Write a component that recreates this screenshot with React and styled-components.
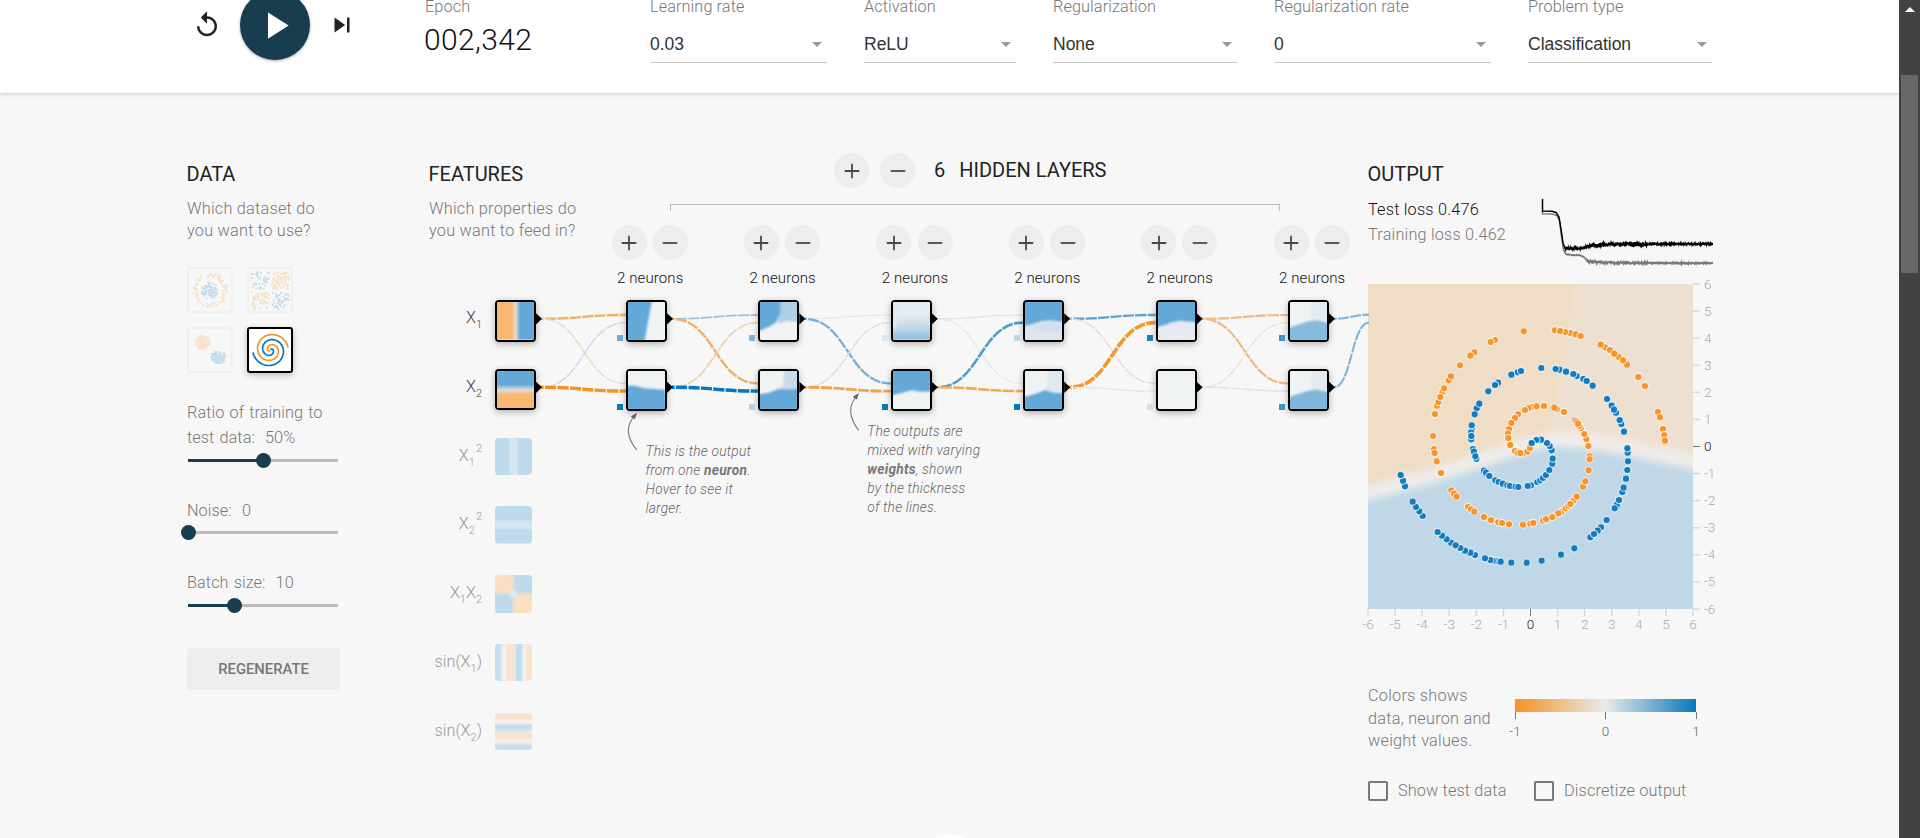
import React from "react";
import styled, { createGlobalStyle, css } from "styled-components";

const ORANGE = "#f59322";
const BLUE = "#0877bd";
const NAVY = "#183d4e";
const sans = `Roboto, "Liberation Sans", sans-serif`;
const arial = `"Liberation Sans", Arial, sans-serif`;

const Global = createGlobalStyle`
  * { box-sizing: border-box; }
  body { margin: 0; overflow: hidden; background: #f7f7f7; font-family: ${sans}; font-weight: 300; }
`;

/* ---------- shell ---------- */
const Window = styled.div`
  display: flex;
  width: 1920px;
  height: 838px;
  overflow: hidden;
`;
const Page = styled.div`
  position: relative;
  flex: 1;
  height: 838px;
  overflow: hidden;
  background: #f7f7f7;
`;
const ScrollTrack = styled.div`
  width: 21px;
  height: 838px;
  background: #424242;
  display: flex;
  flex-direction: column;
  align-items: center;
  padding-top: 7px;
`;
const ScrollArrow = styled.div`
  border: 5px solid transparent;
  border-top: 0;
  border-bottom: 5px solid #fff;
`;
const ScrollThumb = styled.div`
  width: 17px;
  height: 198px;
  margin-top: 63px;
  background: #686868;
`;
const BottomDisc = styled.div`
  position: absolute;
  left: 917px;
  top: 834px;
  width: 66px;
  height: 66px;
  border-radius: 50%;
  background: #fff;
`;

/* ---------- top controls ---------- */
const Header = styled.header`
  position: relative;
  display: flex;
  align-items: flex-start;
  height: 93px;
  padding-left: 192px;
  background: #fff;
  box-shadow: 0 1px 4px rgba(0, 0, 0, 0.18);
`;
const Transport = styled.div`
  display: flex;
  align-items: center;
  width: 233px;
  height: 70px;
  margin-top: -10px;
`;
const PlayButton = styled.div`
  display: flex;
  align-items: center;
  justify-content: center;
  width: 70px;
  height: 70px;
  margin: 0 17px 0 18px;
  border-radius: 50%;
  background: ${NAVY};
  box-shadow: 0 1px 3px rgba(0, 0, 0, 0.35);
`;
const Field = styled.div`
  flex: none;
  width: ${(p) => p.$w}px;
  margin-right: ${(p) => p.$gap}px;
  margin-top: -5px;
`;
const FieldLabel = styled.div`
  font-size: 16.25px;
  line-height: 24px;
  color: #777;
  letter-spacing: 0.1px;
  white-space: nowrap;
`;
const EpochValue = styled.div`
  margin: 3px 0 0 -1px;
  font-size: 30px;
  line-height: 36px;
  letter-spacing: 0.4px;
  color: #111;
`;
const Select = styled.div`
  display: flex;
  align-items: center;
  justify-content: space-between;
  height: 44px;
  padding: 7px 5px 0 0;
  border-bottom: 1px solid #c8c8c8;
  font: 400 17.5px/24px ${arial};
  color: #333;
`;
const Caret = styled.span`
  border: 5px solid transparent;
  border-bottom: 0;
  border-top-color: #999;
`;

/* ---------- main columns ---------- */
const Main = styled.main`
  display: flex;
  align-items: flex-start;
  padding: 69px 0 0 187px;
`;
const DataColumn = styled.section`
  flex: none;
  width: 242px;
`;
const Heading = styled.h4`
  margin: 0 0 0 -0.5px;
  font-size: 20px;
  line-height: 24px;
  font-weight: 400;
  color: #222;
`;
const Lead = styled.p`
  margin: 12px 0 0;
  font-size: 16.25px;
  line-height: 22.4px;
  letter-spacing: 0.24px;
  color: #777;
  white-space: nowrap;
`;
const Thumbs = styled.div`
  display: grid;
  grid-template-columns: 46px 46px;
  gap: 14px;
  margin: 24.2px 0 27px;
`;
const Thumb = styled.svg`
  width: 46px;
  height: 46px;
  border-radius: 3px;
  border: 2px solid ${(p) => (p.$on ? "#000" : "#f0f0f0")};
  background: ${(p) => (p.$on ? "#fff" : "transparent")};
  ${(p) => p.$on && css`box-shadow: 0 2px 6px rgba(0, 0, 0, 0.25);`}
`;
const Control = styled.div`
  width: 152px;
  margin-bottom: ${(p) => p.$gap}px;
`;
const ControlLabel = styled.div`
  font-size: 16.25px;
  line-height: 25px;
  letter-spacing: 0.08px;
  word-spacing: 1px;
  color: #777;
  white-space: pre;
`;
const Slider = styled.div`
  display: flex;
  align-items: center;
  height: 20px;
  padding: 0 1px;
`;
const SliderFill = styled.div`
  flex: none;
  width: ${(p) => p.$w}px;
  height: 3px;
  background: ${NAVY};
`;
const SliderRest = styled.div`
  flex: 1;
  height: 3px;
  background: #bcbcbc;
`;
const Knob = styled.div`
  flex: none;
  width: 15px;
  height: 15px;
  margin: 0 -7.5px;
  border-radius: 50%;
  background: ${NAVY};
  z-index: 1;
`;
const Regenerate = styled.div`
  width: 153px;
  height: 42px;
  border-radius: 3px;
  background: #eee;
  font-size: 14.8px;
  line-height: 42px;
  font-weight: 500;
  text-align: center;
  color: #777;
`;

/* ---------- network ---------- */
const Diagram = styled.section`
  position: relative;
  display: flex;
  flex: none;
  width: 939px;
`;
const Wires = styled.svg`
  position: absolute;
  left: 0;
  top: 0;
  width: 941px;
  height: 600px;
`;
const FeatureColumn = styled.div`
  flex: none;
  width: 155px;
`;
const FeatureList = styled.div`
  margin-top: 57.3px;
`;
const FeatureRow = styled.div`
  display: flex;
  align-items: flex-start;
  height: 68.75px;
`;
const FeatureLabel = styled.div`
  flex: none;
  display: flex;
  justify-content: flex-end;
  width: 53px;
  margin-right: 13px;
  font-size: 16.25px;
  line-height: 35px;
  color: ${(p) => (p.$on ? "#444" : "#999")};
`;
const Sub = styled.span`
  position: relative;
  top: 7px;
  font-size: 11px;
`;
const Sup = styled(Sub)`
  top: -7px;
  margin-left: 1px;
`;
const Tile = styled.div`
  flex: none;
  position: relative;
  width: ${(p) => (p.$on ? 41 : 37)}px;
  height: ${(p) => (p.$on ? 41.5 : 37.5)}px;
  border-radius: 4px;
  overflow: visible;
  ${(p) =>
    p.$on &&
    css`
      border: 2px solid #000;
      box-shadow: 0 2px 7px rgba(0, 0, 0, 0.3);
    `}
`;
const TileArt = styled.svg`
  display: block;
  width: 100%;
  height: 100%;
  border-radius: ${(p) => p.$r}px;
`;
const Bias = styled.i`
  position: absolute;
  left: -11px;
  top: 33px;
  width: 6px;
  height: 6px;
  background: ${(p) => p.$c};
`;
const NetworkColumn = styled.div`
  flex: none;
  width: 784px;
`;
const LayerHeader = styled.div`
  display: flex;
  align-items: center;
  height: 35px;
  margin: -9px 0 0 250px;
`;
const RoundButton = styled.div`
  display: flex;
  align-items: center;
  justify-content: center;
  flex: none;
  width: 35px;
  height: 35px;
  margin-right: ${(p) => p.$gap || 0}px;
  border-radius: 50%;
  background: #ededed;
`;
const LayerTitle = styled(Heading)`
  white-space: pre;
  margin-left: ${(p) => p.$ml}px;
  margin-bottom: 1px;
`;
const Bracket = styled.div`
  width: 609.5px;
  height: 6.5px;
  margin: 16px 0 0 86px;
  border: 1px solid #bbb;
  border-bottom: 0;
`;
const Layers = styled.div`
  display: flex;
  margin-top: 14.5px;
`;
const Layer = styled.div`
  flex: none;
  display: flex;
  flex-direction: column;
  align-items: center;
  width: 132.4px;
`;
const LayerControls = styled.div`
  display: flex;
  gap: 6.3px;
  height: 35px;
  margin-left: -1px;
`;
const NeuronCount = styled.div`
  margin-top: 9px;
  font-size: 15px;
  line-height: 18px;
  letter-spacing: 0.1px;
  color: #111;
`;
const Neurons = styled.div`
  display: flex;
  flex-direction: column;
  gap: 27.5px;
  align-self: flex-start;
  margin: 13px 0 0 42px;
`;
const Callout = styled.p`
  position: absolute;
  left: ${(p) => p.$x}px;
  top: ${(p) => p.$y}px;
  margin: 0;
  font-size: 13.75px;
  line-height: 19.1px;
  letter-spacing: 0.23px;
  font-style: italic;
  color: #666;
  white-space: pre;
  b { font-weight: 700; color: #777; }
`;

/* ---------- output ---------- */
const OutputColumn = styled.section`
  flex: none;
  width: 352px;
`;
const LossRow = styled.div`
  display: flex;
  justify-content: space-between;
  width: 345px;
  height: 87px;
  padding-top: 11px;
`;
const Loss = styled.div`
  font-size: 16.25px;
  line-height: 25px;
  letter-spacing: 0.2px;
  color: ${(p) => p.$c};
`;
const LossChart = styled.svg`
  width: 172px;
  height: 75px;
`;
const Plot = styled.svg`
  display: block;
  width: 360px;
  height: 356px;
  margin-top: 11px;
  margin-left: -10px;
  overflow: visible;
  font: 300 13.5px ${sans};
`;
const Legend = styled.div`
  display: flex;
  margin-top: 45px;
`;
const LegendText = styled(Lead)`
  margin: 0;
  width: 138px;
  line-height: 22.7px;
`;
const Scale = styled.div`
  width: 200px;
  margin-top: 14px;
`;
const ScaleBar = styled.div`
  width: 181px;
  height: 12.5px;
  margin-left: 9px;
  background: linear-gradient(to right, ${ORANGE}, #e8eaeb 50%, ${BLUE});
`;
const ScaleTicks = styled.div`
  display: flex;
  justify-content: space-between;
  margin-left: -1px;
`;
const ScaleTick = styled.div`
  width: 20px;
  font-size: 13.5px;
  line-height: 24px;
  text-align: center;
  color: #666;
  &::before {
    content: "";
    display: block;
    width: 1px;
    height: 7px;
    margin: 0 auto;
    background: #777;
  }
`;
const Checks = styled.div`
  display: flex;
  margin-top: 27.4px;
`;
const Check = styled.div`
  display: flex;
  align-items: center;
  width: ${(p) => p.$w}px;
  height: 20px;
  font-size: 16.25px;
  letter-spacing: 0.14px;
  color: #777;
  white-space: nowrap;
`;
const CheckBox = styled.span`
  width: 20px;
  height: 20px;
  margin-right: 10px;
  border: 2px solid #777;
  border-radius: 2px;
`;

/* ---------- drawing data ---------- */
const rand = (seed) => () => {
  seed = (seed * 16807) % 2147483647;
  return seed / 2147483647;
};

function dataset(kind) {
  const r = rand(kind * 911 + 17);
  const dots = [];
  if (kind === 0) {
    for (let i = 0; i < 95; i++) {
      const a = r() * 6.283, d = r() * 8.5;
      dots.push([20.5 + d * Math.cos(a), 21 + d * Math.sin(a), BLUE]);
      const b = r() * 6.283, e = 13.2 + r() * 4;
      dots.push([21 + e * Math.cos(b), 21 + e * Math.sin(b), ORANGE]);
    }
  } else if (kind === 1) {
    for (let i = 0; i < 230; i++) {
      const x = (r() * 2 - 1) * 17, y = (r() * 2 - 1) * 17;
      dots.push([21.5 + x + Math.sign(x) * 1.5, 21.5 + y + Math.sign(y) * 1.5, x * y > 0 ? BLUE : ORANGE]);
    }
  } else {
    for (let i = 0; i < 130; i++) {
      const a = r() * 6.283, d = Math.pow(r(), 0.7) * 7;
      dots.push([14 + d * Math.cos(a), 13.8 + d * Math.sin(a), ORANGE]);
      const b = r() * 6.283, e = Math.pow(r(), 0.7) * 7.4;
      dots.push([28.8 + e * Math.cos(b), 28.2 + e * 0.85 * Math.sin(b), BLUE]);
    }
  }
  const seen = new Set();
  return dots
    .map(([x, y, c]) => [Math.round(x - 0.8), Math.round(y - 0.8), c])
    .filter(([x, y]) => !seen.has(`${x},${y}`) && seen.add(`${x},${y}`));
}

const spiral = (delta) =>
  Array.from({ length: 80 }, (_, i) => {
    const u = (i + 2) / 82;
    const t = u * 3.5 * Math.PI + delta;
    return `${(21.5 + 18 * u * Math.sin(t)).toFixed(2)},${(21 - 18 * u * Math.cos(t)).toFixed(2)}`;
  }).join(" ");

const PALE = "#f0f3f3";
const SKY = "#63a8d6";
const NEURONS = [
  [
    { bias: "#6fabd3", bg: PALE, shapes: [["-2,-2 24,-2 21,14 16.5,39 -2,39", SKY]] },
    { bias: BLUE, bg: PALE, shapes: [["-2,14.5 8,14.7 16,17 37,18.5 39,39 -2,39", SKY]] },
  ],
  [
    { bias: "#82b3d6", bg: PALE, shapes: [["20,-2 39,-2 39,20 28,18.5 18,21", "#afcfe5"], ["-2,-2 21,-2 20,12 17,19 10,24 -2,29", SKY]] },
    { bias: "#b5d2e2", bg: PALE, shapes: [["24,-2 39,-2 39,20 18,20 23,14", "#c8dcec"], ["-2,23 9,21.5 18,18 39,18 39,39 -2,39", SKY]] },
  ],
  [
    { bias: "#dce5e9", bg: "#e6ecf0", gradient: true, shapes: [] },
    { bias: BLUE, bg: SKY, shapes: [["-2,24 8,22 18,19 28,20.5 39,20 39,39 -2,39", PALE]] },
  ],
  [
    { bias: "#c2d6e4", bg: SKY, shapes: [["-2,24 8,21.5 16,19 24,18 39,19.5 39,39 -2,39", "#dde6ee"], ["4,26 20,20 38,22 36,28 16,29", "#d0e0ec"]] },
    { bias: BLUE, bg: PALE, shapes: [["23,-2 39,-2 39,24 18,22 22,12", "#dde8ef"], ["-2,26 9,23 20,19 28,21.5 39,22 39,39 -2,39", SKY]] },
  ],
  [
    { bias: "#1b80c0", bg: SKY, shapes: [["-2,25 9,22 14,20 22,18.5 39,20 39,39 -2,39", "#e6ebf1"]] },
    { bias: "#d0dfe9", bg: PALE, shapes: [] },
  ],
  [
    { bias: "#3f93cb", bg: PALE, shapes: [["22,-2 39,-2 39,22 20,22", "#e4ebf1"], ["-2,26 9,22 18,19 26,18 39,21 39,39 -2,39", "#86bbdd"]] },
    { bias: "#3f93cb", bg: PALE, shapes: [["22,-2 39,-2 39,22 20,22", "#e4ebf1"], ["-2,26 9,22.5 18,19.5 26,18.5 39,21 39,39 -2,39", "#7fb7dc"]] },
  ],
];

const FEATURES = [
  { id: "x1", on: true, label: <>X<Sub>1</Sub></>, stops: [["0.4", "#f9b872"], ["0.51", "#e6dccf"], ["0.62", SKY]] },
  { id: "x2", on: true, vertical: true, label: <>X<Sub>2</Sub></>, stops: [["0.36", SKY], ["0.5", "#dfdcd4"], ["0.64", "#f9b872"]] },
  { id: "x1q", label: <>X<Sub>1</Sub><Sup>2</Sup></>, stops: [["0.35", "#bedaed"], ["0.42", "#d7e6ee"], ["0.58", "#d7e6ee"], ["0.65", "#bedaed"]] },
  { id: "x2q", vertical: true, label: <>X<Sub>2</Sub><Sup>2</Sup></>, stops: [["0.36", "#bedaed"], ["0.45", "#d7e6ee"], ["0.58", "#d7e6ee"], ["0.65", "#bedaed"]] },
  { id: "xx", quad: true, label: <>X<Sub>1</Sub>X<Sub>2</Sub></> },
  { id: "s1", label: <>sin(X<Sub>1</Sub>)</>, stops: [["0", "#c8dfed"], ["0.1", "#c1dcec"], ["0.25", "#f5f3f1"], ["0.36", "#f9e3cc"], ["0.46", "#f8e6d4"], ["0.53", "#e3e8e8"], ["0.62", "#c1dcec"], ["0.7", "#c4ddec"], ["0.79", "#f3f3f3"], ["0.87", "#f9e3cc"], ["1", "#f9e5d0"]] },
  { id: "s2", vertical: true, label: <>sin(X<Sub>2</Sub>)</>, stops: [["0", "#f9e5d0"], ["0.13", "#f9e3cc"], ["0.26", "#f3f3f3"], ["0.34", "#c4ddec"], ["0.42", "#c8dfec"], ["0.5", "#e3e8e8"], ["0.58", "#f9e3cc"], ["0.65", "#f9e3cc"], ["0.77", "#f5f3f1"], ["0.87", "#c6deec"], ["1", "#c8dfed"]] },
];

/* per gap: [top→top, top→bottom, bottom→top, bottom→bottom] as [colour, width] */
const LINKS = [
  [["#f2b067", 2.4], ["#ead8c5", 1.4], ["#c9dbe6", 1.4], [ORANGE, 3.4]],
  [["#9cc3dd", 1.8], ["#f2b067", 2.4], ["#edd0b0", 1.7], [BLUE, 3.4]],
  [["#e1e6e9", 1.3], ["#74b0d7", 2.3], ["#d2e0e8", 1.4], ["#f1a44e", 2.8]],
  [["#e9dfd5", 1.3], ["#e0e6e9", 1.3], ["#4f9dce", 2.6], ["#f3a752", 2.6]],
  [["#5aa3d0", 2.4], ["#ebdac9", 1.4], ["#f6982d", 3.6], ["#ebe1d8", 1.3]],
  [["#f0ba7c", 2.2], ["#f0b87a", 2.2], ["#eadfd4", 1.3], ["#d5e2ea", 1.4]],
];
const NODE_X = [495, 626, 758.4, 890.8, 1023.2, 1155.6, 1288];
const ROW_Y = [318.8, 387.3];

const wire = (x1, y1, x2, y2) => {
  const m = (x1 + x2) / 2;
  return `M${x1} ${y1}C${m} ${y1} ${m} ${y2} ${x2} ${y2}`;
};

/* sample positions, in thirds of a pixel */
const ORANGE_PTS = [
  [521, 184], [615, 181], [661, 189], [645, 186], [630, 183], [677, 193], [692, 198], [435, 210], [422, 216], [373, 247], [361, 257],
  [330, 286], [296, 331], [303, 319], [277, 366], [282, 355], [261, 407], [265, 396], [271, 381], [255, 432], [249, 498], [252, 537],
  [254, 549], [260, 574], [273, 609], [304, 661], [312, 671], [320, 680], [354, 711], [363, 718], [373, 725], [402, 741], [423, 750],
  [445, 757], [456, 759], [477, 763], [519, 764], [541, 761], [550, 759], [579, 752], [588, 748], [607, 741], [633, 726], [625, 730],
  [647, 715], [655, 708], [669, 693], [661, 702], [680, 680], [699, 650], [706, 634], [716, 601], [719, 559], [719, 568], [715, 528],
  [709, 507], [703, 492], [674, 450], [679, 455], [692, 474], [688, 468], [684, 461], [620, 417], [613, 413], [642, 426], [582, 408],
  [545, 411], [560, 409], [535, 415], [525, 420], [504, 433], [495, 444], [484, 459], [477, 478], [474, 491], [475, 504], [481, 525],
  [495, 543], [503, 548], [520, 550], [511, 549], [532, 545], [540, 534], [765, 232], [752, 224], [780, 240], [806, 261], [793, 251],
  [831, 284], [819, 271], [865, 321], [885, 348], [924, 426], [930, 442], [939, 477], [943, 495], [945, 512],
];
const BLUE_PTS = [
  [574, 294], [628, 299], [617, 297], [648, 305], [680, 318], [670, 312], [700, 327], [710, 333], [728, 347], [503, 307], [513, 303],
  [484, 314], [444, 338], [435, 345], [415, 364], [380, 415], [388, 401], [374, 433], [365, 478], [365, 466], [364, 508], [363, 488],
  [364, 498], [369, 537], [372, 545], [379, 567], [376, 559], [402, 602], [408, 608], [418, 618], [436, 631], [446, 636], [458, 641],
  [472, 646], [480, 648], [497, 650], [505, 651], [543, 646], [533, 648], [562, 636], [571, 631], [579, 624], [588, 615], [598, 600],
  [607, 581], [608, 566], [605, 541], [599, 528], [591, 519], [573, 509], [559, 510], [545, 519], [771, 387], [785, 407], [798, 428],
  [792, 419], [814, 462], [809, 450], [822, 485], [833, 548], [832, 535], [834, 574], [832, 600], [828, 626], [817, 666], [821, 653],
  [801, 704], [807, 690], [794, 715], [770, 750], [753, 772], [743, 782], [721, 802], [732, 792], [673, 835], [633, 854], [575, 872],
  [530, 878], [484, 878], [437, 873], [452, 875], [428, 872], [421, 870], [405, 865], [375, 855], [361, 848], [345, 842], [331, 834],
  [303, 818], [317, 826], [290, 808], [276, 797], [263, 786], [218, 738], [208, 724], [198, 711], [188, 695], [165, 649], [159, 632],
  [152, 615],
];

function lossPath(points, noise, seed) {
  const r = rand(seed);
  let d = "";
  for (let i = 0; i < points.length - 1; i++) {
    const [x0, y0] = points[i], [x1, y1] = points[i + 1];
    const amp = noise[i] || 0;
    const n = amp ? Math.ceil((x1 - x0) * 4) : 1;
    for (let k = 0; k < n; k++) {
      const t = k / n;
      d += `${d ? "L" : "M"}${(x0 + (x1 - x0) * t).toFixed(2)} ${(y0 + (y1 - y0) * t + (r() - 0.5) * 2 * amp).toFixed(1)}`;
    }
  }
  const last = points[points.length - 1];
  return d + `L${last[0]} ${last[1]}`;
}
const TEST_LOSS = lossPath(
  [[1542.5, 199], [1542.5, 211], [1552, 211.3], [1556, 212.5], [1559, 217], [1561, 229], [1563, 243], [1565, 248.5], [1580, 248.5], [1592, 245.5], [1610, 244.5], [1648, 244], [1713, 244]],
  [0, 0, 0, 0, 0, 0, 0, 1.6, 1.5, 2.2, 2.2, 0.9], 5
);
const TRAIN_LOSS = lossPath(
  [[1542.5, 211], [1542.5, 213.7], [1552, 214], [1557, 215.5], [1559.5, 221], [1562, 240], [1563.5, 250], [1566, 254.5], [1580, 255.3], [1584, 257], [1588, 261.5], [1600, 262.5], [1648, 263], [1713, 263.2]],
  [0, 0, 0, 0, 0, 0, 0, 0.4, 0.3, 0.5, 1.9, 1.1, 0.5], 9
);

/* ---------- small parts ---------- */
const Icon = ({ size, d, fill = "#222" }) => (
  <svg width={size} height={size} viewBox="0 0 24 24" fill={fill}><path d={d} /></svg>
);
const Sign = ({ plus, gap }) => (
  <RoundButton $gap={gap}>
    <svg width="18" height="18" viewBox="0 0 18 18" stroke="#4a4a4a" strokeWidth="1.8">
      <path d={plus ? "M1.7 9H16.3M9 1.7V16.3" : "M1.7 9H16.3"} />
    </svg>
  </RoundButton>
);
const Dropdown = ({ label, value, w, gap }) => (
  <Field $w={w} $gap={gap}>
    <FieldLabel>{label}</FieldLabel>
    <Select>{value}<Caret /></Select>
  </Field>
);
const RangeControl = ({ label, at, gap }) => (
  <Control $gap={gap}>
    <ControlLabel>{label}</ControlLabel>
    <Slider><SliderFill $w={at} /><Knob /><SliderRest /></Slider>
  </Control>
);
function FeatureTile({ f }) {
  return (
    <Tile $on={f.on}>
      <TileArt $r={f.on ? 1 : 4} viewBox="0 0 37 37" preserveAspectRatio="none">
        {f.quad ? (
          <>
            <defs><filter id="quadBlur"><feGaussianBlur stdDeviation="0.8" /></filter></defs>
            <g filter="url(#quadBlur)">
              <rect x="-4" y="-4" width="22.5" height="22.5" fill="#fadfc0" />
              <rect x="18.5" y="-4" width="23" height="22.5" fill="#bedaed" />
              <rect x="-4" y="18.5" width="22.5" height="23" fill="#bedaed" />
              <rect x="18.5" y="18.5" width="23" height="23" fill="#fadfc0" />
              <circle cx="18.5" cy="18.5" r="3.6" fill="#e6e9e8" />
            </g>
          </>
        ) : (
          <>
            <defs>
              <linearGradient id={`g-${f.id}`} x2={f.vertical ? 0 : 1} y2={f.vertical ? 1 : 0}>
                {f.stops.map(([o, c], i) => <stop key={i} offset={o} stopColor={c} />)}
              </linearGradient>
            </defs>
            <rect width="37" height="37" fill={`url(#g-${f.id})`} />
          </>
        )}
      </TileArt>
    </Tile>
  );
}
function Neuron({ n }) {
  return (
    <Tile $on>
      <TileArt $r={1} viewBox="0 0 37 37" preserveAspectRatio="none">
        <defs>
          <filter id="soft" x="-20%" y="-20%" width="140%" height="140%"><feGaussianBlur stdDeviation="0.9" /></filter>
          <linearGradient id="fade" x2="0" y2="1">
            <stop offset="0.3" stopColor="#e6ecf0" />
            <stop offset="0.6" stopColor="#cfdfea" />
            <stop offset="1" stopColor="#8cbddf" />
          </linearGradient>
        </defs>
        <rect width="37" height="37" fill={n.bg} />
        {n.gradient && (
          <>
            <rect width="37" height="37" fill="url(#fade)" />
            <path filter="url(#soft)" d="M-2 -2H5V14L3 24L-2 30Z" fill="#e4eaee" opacity="0.9" />
            <path filter="url(#soft)" d="M10 21Q20 16 30 22V28H8Z" fill="#c3d9e7" opacity="0.6" />
          </>
        )}
        {n.shapes.map(([pts, c], i) => <polygon key={i} points={pts} fill={c} filter="url(#soft)" />)}
      </TileArt>
      <Bias $c={n.bias} />
    </Tile>
  );
}

function Heatmap() {
  const ticks = Array.from({ length: 13 }, (_, i) => i - 6);
  return (
    <Plot viewBox="-10 0 360 356">
      <defs>
        <clipPath id="heat"><rect width="325" height="325" /></clipPath>
        <filter id="b1"><feGaussianBlur stdDeviation="4" /></filter>
        <filter id="b2" x="-10%" y="-50%" width="120%" height="200%"><feGaussianBlur stdDeviation="4" /></filter>
      </defs>
      <g clipPath="url(#heat)">
        <rect width="325" height="325" fill="#efddc6" />
        <path d="M205 0H325V180H178L190 100L197 80Z" fill="#eee0d0" />
        <path filter="url(#b1)" d="M-20 216L0 211L60 195L120 176L160 164L185 159L215 161L250 166L325 181L345 184V345H-20Z" fill="#c0d7e7" />
        <path filter="url(#b2)" d="M-20 214L0 209L60 193L120 174L160 160L185 155L215 157L250 162L325 178L345 181" fill="none" stroke="#f0efee" strokeWidth="13" />
      </g>
      <g stroke="#fff" strokeOpacity="0.75" strokeWidth="1.1" transform="translate(-18 -14)">
        {ORANGE_PTS.map(([x, y], i) => <circle key={`o${i}`} cx={x / 3} cy={y / 3} r="3.6" fill="#f7942a" />)}
        {BLUE_PTS.map(([x, y], i) => <circle key={`b${i}`} cx={x / 3} cy={y / 3} r="3.6" fill="#137bbf" />)}
      </g>
      {ticks.map((t) => {
        const p = ((t + 6) * 325) / 12;
        const zero = t === 0;
        return (
          <g key={t} stroke={zero ? "#777" : "#d8d8d8"} strokeWidth={zero ? 1 : 1.5}>
            <path d={`M${p} 325v7`} />
            <path d={`M325 ${325 - p}h7`} />
            <g stroke="none" fill={zero ? "#222" : "#aaa"}>
              <text x={p} y="345" textAnchor="middle">{t}</text>
              <text x="336" y={325 - p + 4.5}>{t}</text>
            </g>
          </g>
        );
      })}
    </Plot>
  );
}

export default function App() {
  return (
    <>
      <Global />
      <Window>
        <Page>
          <Header>
            <Transport>
              <Icon size={30} d="M12 5V1L7 6l5 5V7c3.31 0 6 2.69 6 6s-2.69 6-6 6-6-2.69-6-6H4c0 4.42 3.58 8 8 8s8-3.58 8-8-3.58-8-8-8z" />
              <PlayButton><Icon size={45} fill="#fff" d="M8 5v14l11-7z" /></PlayButton>
              <Icon size={30} d="M6 18l8.5-6L6 6v12zM16 6v12h2V6h-2z" />
            </Transport>
            <Field $w={107} $gap={118}>
              <FieldLabel>Epoch</FieldLabel>
              <EpochValue>002,342</EpochValue>
            </Field>
            <Dropdown label="Learning rate" value="0.03" w={177} gap={37} />
            <Dropdown label="Activation" value="ReLU" w={152} gap={37} />
            <Dropdown label="Regularization" value="None" w={184} gap={37} />
            <Dropdown label="Regularization rate" value="0" w={217} gap={37} />
            <Dropdown label="Problem type" value="Classification" w={184} gap={0} />
          </Header>

          <Main>
            <DataColumn>
              <Heading>DATA</Heading>
              <Lead>Which dataset do<br />you want to use?</Lead>
              <Thumbs>
                {[0, 1, 2].map((k) => (
                  <Thumb key={k} viewBox="0 0 42 42">
                    <g opacity="0.2">
                      {dataset(k).map(([x, y, c], i) => (
                        <rect key={i} x={x} y={y} width="1.8" height="1.8" fill={c} />
                      ))}
                    </g>
                  </Thumb>
                ))}
                <Thumb $on viewBox="0 0 42 42">
                  <polyline points={spiral(0)} fill="none" stroke={BLUE} strokeWidth="1.7" />
                  <polyline points={spiral(Math.PI)} fill="none" stroke={ORANGE} strokeWidth="1.7" />
                </Thumb>
              </Thumbs>
              <RangeControl label={"Ratio of training to\ntest data:  50%"} at={75.5} gap={27.5} />
              <RangeControl label="Noise:  0" at={0.5} gap={27.5} />
              <RangeControl label="Batch size:  10" at={46.5} gap={32.5} />
              <Regenerate>REGENERATE</Regenerate>
            </DataColumn>

            <Diagram>
              <Wires viewBox="429 162 941 600">
                {LINKS.map((links, g) =>
                  links.map(([c, w], i) => {
                    const from = i >> 1, to = i % 2;
                    return (
                      <path
                        key={`${g}-${i}`}
                        d={wire(NODE_X[g] + 46, ROW_Y[from], NODE_X[g + 1], ROW_Y[to] + (from ? 3.8 : -3.8))}
                        fill="none" stroke={c} strokeWidth={w} strokeDasharray="11.25 1.25" strokeDashoffset="8.7"
                      />
                    );
                  })
                )}
                {[0, 1].map((r) => (
                  <path key={r} d={wire(1334, ROW_Y[r], 1369, ROW_Y[0] + (r ? 3.8 : -4.2))} fill="none" stroke="#7fb5d9" strokeWidth="2.1" strokeDasharray="11.25 1.25" strokeDashoffset="8.7" />
                ))}
                {NODE_X.map((x) => ROW_Y.map((y) => <path key={`${x}${y}`} d={`M${x + 41} ${y - 5.6}l6 5.6l-6 5.6z`} />))}
                <g fill="none" stroke="#777" strokeWidth="1.1">
                  <path d="M636.7 450Q621.5 431 634 416.5" />
                  <path d="M858.7 430.5Q844 411 856 397" />
                </g>
                <g fill="#666">
                  <path d="M637 412.7l-6.3 3.8l4.2 2.8z" />
                  <path d="M859 393l-6.3 3.8l4.2 2.8z" />
                </g>
              </Wires>

              <FeatureColumn>
                <Heading>FEATURES</Heading>
                <Lead>Which properties do<br />you want to feed in?</Lead>
                <FeatureList>
                  {FEATURES.map((f) => (
                    <FeatureRow key={f.id}>
                      <FeatureLabel $on={f.on}>{f.label}</FeatureLabel>
                      <FeatureTile f={f} />
                    </FeatureRow>
                  ))}
                </FeatureList>
              </FeatureColumn>

              <NetworkColumn>
                <LayerHeader>
                  <Sign plus gap={11} />
                  <Sign />
                  <LayerTitle $ml={19}>6</LayerTitle>
                  <LayerTitle $ml={14}>HIDDEN LAYERS</LayerTitle>
                </LayerHeader>
                <Bracket />
                <Layers>
                  {NEURONS.map((pair, i) => (
                    <Layer key={i}>
                      <LayerControls><Sign plus /><Sign /></LayerControls>
                      <NeuronCount>2 neurons</NeuronCount>
                      <Neurons>{pair.map((n, k) => <Neuron key={k} n={n} />)}</Neurons>
                    </Layer>
                  ))}
                </Layers>
              </NetworkColumn>

              <Callout $x={216.5} $y={280}>
                This is the output<br />from one <b>neuron</b>.<br />Hover to see it<br />larger.
              </Callout>
              <Callout $x={438.2} $y={260}>
                The outputs are<br />mixed with varying<br /><b>weights</b>, shown<br />by the thickness<br />of the lines.
              </Callout>
            </Diagram>

            <OutputColumn>
              <Heading>OUTPUT</Heading>
              <LossRow>
                <div>
                  <Loss $c="#111">Test loss 0.476</Loss>
                  <Loss $c="#777">Training loss 0.462</Loss>
                </div>
                <LossChart viewBox="1541 197 172 75" fill="none" strokeWidth="1.5">
                  <path d={TRAIN_LOSS} stroke="#777" />
                  <path d={TEST_LOSS} stroke="#000" />
                </LossChart>
              </LossRow>
              <Heatmap />
              <Legend>
                <LegendText>Colors shows<br />data, neuron and<br />weight values.</LegendText>
                <Scale>
                  <ScaleBar />
                  <ScaleTicks>
                    <ScaleTick>-1</ScaleTick><ScaleTick>0</ScaleTick><ScaleTick>1</ScaleTick>
                  </ScaleTicks>
                </Scale>
              </Legend>
              <Checks>
                <Check $w={166}><CheckBox />Show test data</Check>
                <Check $w={160}><CheckBox />Discretize output</Check>
              </Checks>
            </OutputColumn>
          </Main>
          <BottomDisc />
        </Page>
        <ScrollTrack><ScrollArrow /><ScrollThumb /></ScrollTrack>
      </Window>
    </>
  );
}
